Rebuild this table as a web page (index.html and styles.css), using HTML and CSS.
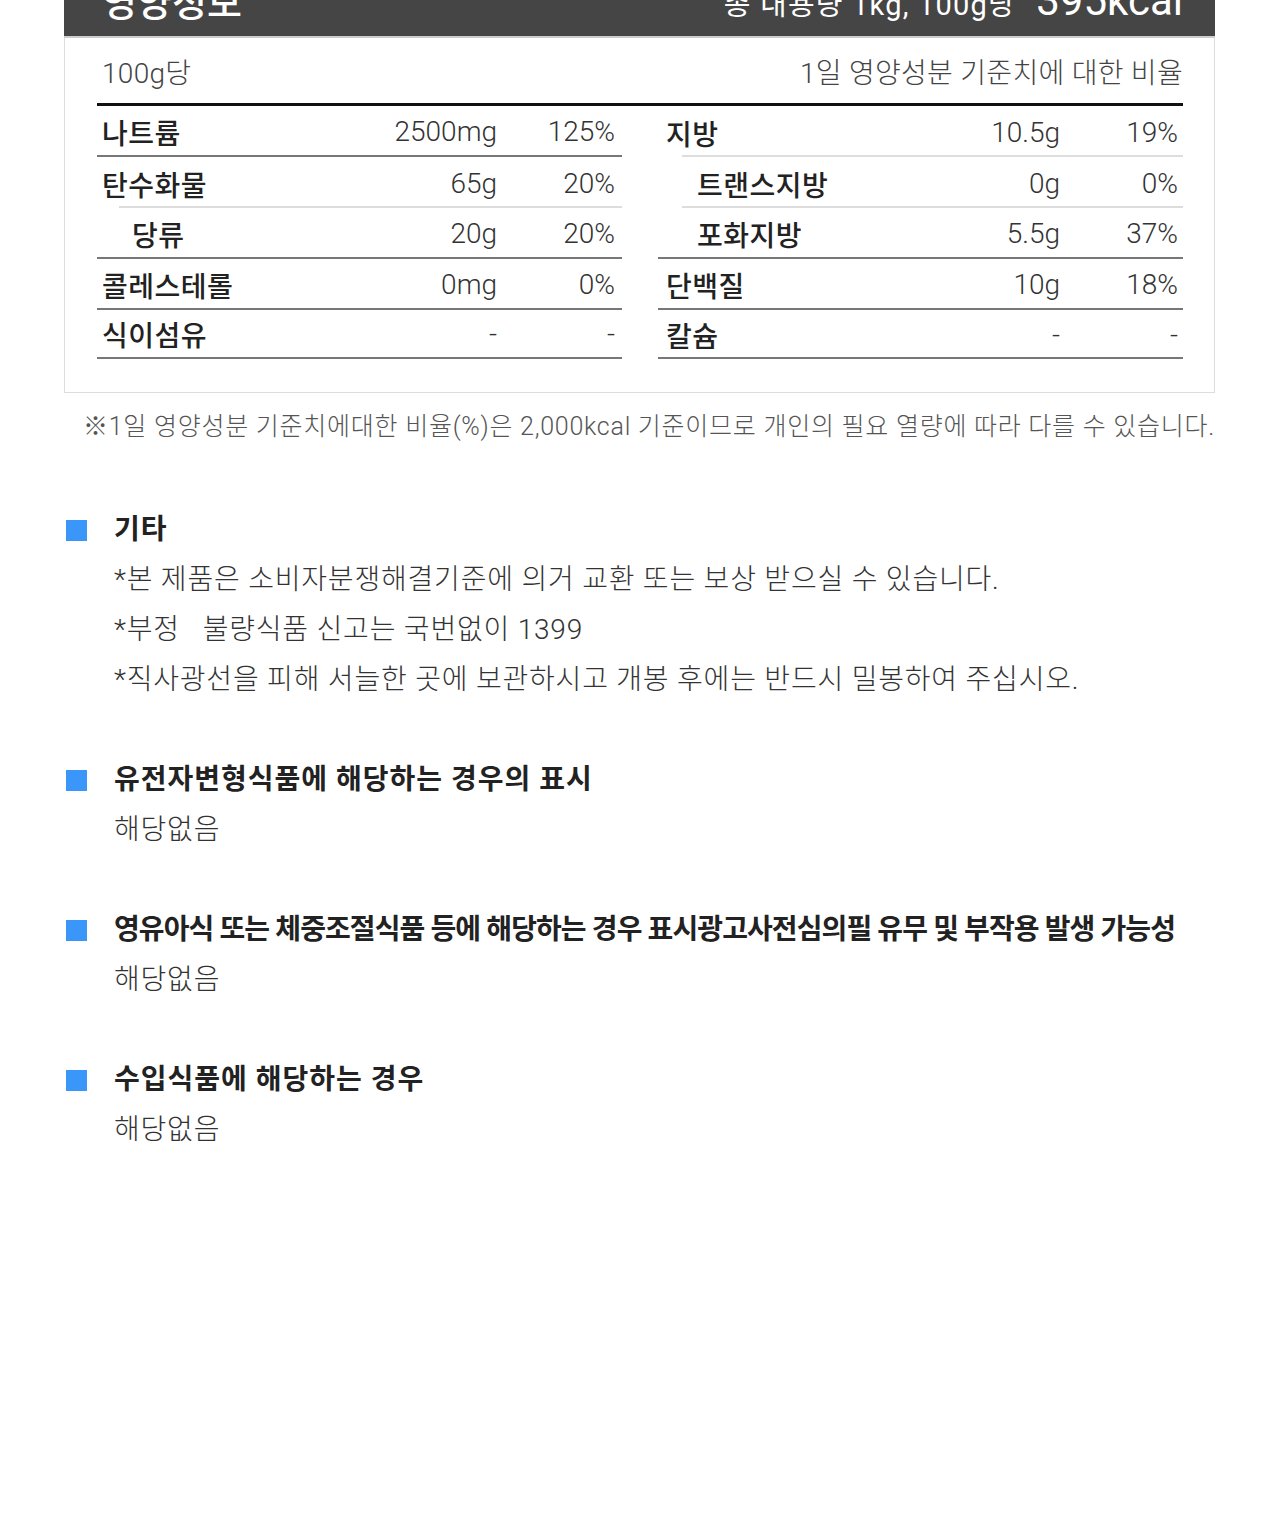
FILE: index.html
```html
<!DOCTYPE html>
<html lang="ko">
<head>
    <meta charset="UTF-8">
    <meta name="viewport" content="width=device-width, initial-scale=1.0">
    <title>영양정보</title>
    <link rel="stylesheet" href="styles.css">
</head>
<body>
    <div class="page">
        <div class="nutri">
            <div class="nutri-head">
                <h2>영양정보</h2>
                <p class="total">총 내용량 1kg, 100g당 <strong>395kcal</strong></p>
            </div>

            <div class="nutri-body">
                <div class="nutri-top">
                    <span>100g당</span>
                    <span>1일 영양성분 기준치에 대한 비율</span>
                </div>

                <div class="nutri-grid">
                    <div class="col">
                        <div class="row"><span class="name">나트륨</span><span class="amt">2500mg</span><span class="pct">125%</span></div>
                        <div class="row light"><span class="name">탄수화물</span><span class="amt">65g</span><span class="pct">20%</span></div>
                        <div class="row sub"><span class="name">당류</span><span class="amt">20g</span><span class="pct">20%</span></div>
                        <div class="row"><span class="name">콜레스테롤</span><span class="amt">0mg</span><span class="pct">0%</span></div>
                        <div class="row last"><span class="name">식이섬유</span><span class="amt">-</span><span class="pct">-</span></div>
                    </div>
                    <div class="col right">
                        <div class="row light"><span class="name">지방</span><span class="amt">10.5g</span><span class="pct">19%</span></div>
                        <div class="row sub light"><span class="name">트랜스지방</span><span class="amt">0g</span><span class="pct">0%</span></div>
                        <div class="row sub"><span class="name">포화지방</span><span class="amt">5.5g</span><span class="pct">37%</span></div>
                        <div class="row"><span class="name">단백질</span><span class="amt">10g</span><span class="pct">18%</span></div>
                        <div class="row last"><span class="name">칼슘</span><span class="amt">-</span><span class="pct">-</span></div>
                    </div>
                </div>
            </div>
        </div>

        <p class="note">※1일 영양성분 기준치에대한 비율(%)은 2,000kcal 기준이므로 개인의 필요 열량에 따라 다를 수 있습니다.</p>

        <div class="info">
            <div class="info-item">
                <h3>기타</h3>
                <p>*본 제품은 소비자분쟁해결기준에 의거 교환 또는 보상 받으실 수 있습니다.</p>
                <p>*부정 &nbsp; 불량식품 신고는 국번없이 1399</p>
                <p>*직사광선을 피해 서늘한 곳에 보관하시고 개봉 후에는 반드시 밀봉하여 주십시오.</p>
            </div>
            <div class="info-item">
                <h3>유전자변형식품에 해당하는 경우의 표시</h3>
                <p>해당없음</p>
            </div>
            <div class="info-item">
                <h3 class="tight">영유아식 또는 체중조절식품 등에 해당하는 경우 표시광고사전심의필 유무 및 부작용 발생 가능성</h3>
                <p>해당없음</p>
            </div>
            <div class="info-item">
                <h3>수입식품에 해당하는 경우</h3>
                <p>해당없음</p>
            </div>
        </div>
    </div>
</body>
</html>
```

FILE: styles.css
```css
* {
    margin: 0;
    padding: 0;
    box-sizing: border-box;
}

body {
    background: #fff;
    color: #333;
    font-family: Roboto, "Noto Sans CJK KR", sans-serif;
    font-weight: 300;
}

.page {
    width: 1151px;
    margin-left: 64px;
    min-height: 1525px;
}

/* nutrition box */
.nutri-head {
    height: 82px;
    margin-top: -44px;
    padding: 0 32px 0 38px;
    background: #454545;
    border-bottom: 2px solid #cdcdcd;
    color: #fff;
    display: flex;
    justify-content: space-between;
    align-items: flex-end;
    line-height: 1;
}

.nutri-head h2 {
    font-size: 38px;
    font-weight: 500;
    padding-bottom: 14px;
}

.nutri-head .total {
    font-size: 29px;
    font-weight: 400;
    padding-bottom: 14px;
    letter-spacing: 1.2px;
}

.nutri-head .total strong {
    font-size: 42px;
    font-weight: 400;
    margin-left: 12px;
    letter-spacing: 0;
}

.nutri-body {
    border: 1px solid #ddd;
    border-top: none;
    padding: 0 31px 33px 32px;
}

.nutri-top {
    height: 68px;
    display: flex;
    justify-content: space-between;
    align-items: center;
    padding: 0 0 0 5px;
    border-bottom: 3px solid #111;
    font-size: 28px;
    color: #444;
    letter-spacing: 0.3px;
}

.nutri-grid {
    display: grid;
    grid-template-columns: 1fr 1fr;
    gap: 36px;
}

.row {
    height: 51px;
    display: grid;
    grid-template-columns: 1fr 120px 118px;
    align-items: center;
    padding: 2px 7px 0 5px;
    border-bottom: 2px solid #777;
    font-size: 28px;
    color: #333;
}

.col.right .row {
    padding: 2px 5px 0 8px;
}

.row.light {
    border-bottom: none;
    background: linear-gradient(#ddd, #ddd) 22px 100% / calc(100% - 22px) 2px no-repeat;
}

.col.right .row.light {
    background-position: 24px 100%;
    background-size: calc(100% - 24px) 2px;
}

.row.sub .name {
    padding-left: 30px;
}

.col.right .row.sub .name {
    padding-left: 31px;
}

.row.last {
    height: 49px;
    padding-top: 0;
}

.row .name {
    font-weight: 500;
    color: #222;
    letter-spacing: 0.5px;
}

.row .amt,
.row .pct {
    text-align: right;
}

.note {
    margin-top: 18px;
    text-align: right;
    font-size: 25px;
    color: #555;
    letter-spacing: 0.75px;
    line-height: 32px;
}

/* info sections */
.info {
    margin-top: 62px;
}

.info-item {
    margin-bottom: 50px;
}

.info-item h3 {
    position: relative;
    padding-left: 50px;
    font-size: 28px;
    font-weight: 700;
    color: #222;
    line-height: 50px;
    letter-spacing: 1px;
}

.info-item h3.tight {
    letter-spacing: -0.9px;
}

.info-item h3::before {
    content: "";
    position: absolute;
    left: 2px;
    top: 15px;
    width: 21px;
    height: 21px;
    background: #3a96f8;
}

.info-item p {
    padding-left: 50px;
    font-size: 28px;
    color: #333;
    line-height: 50px;
    letter-spacing: 0.8px;
}
```
